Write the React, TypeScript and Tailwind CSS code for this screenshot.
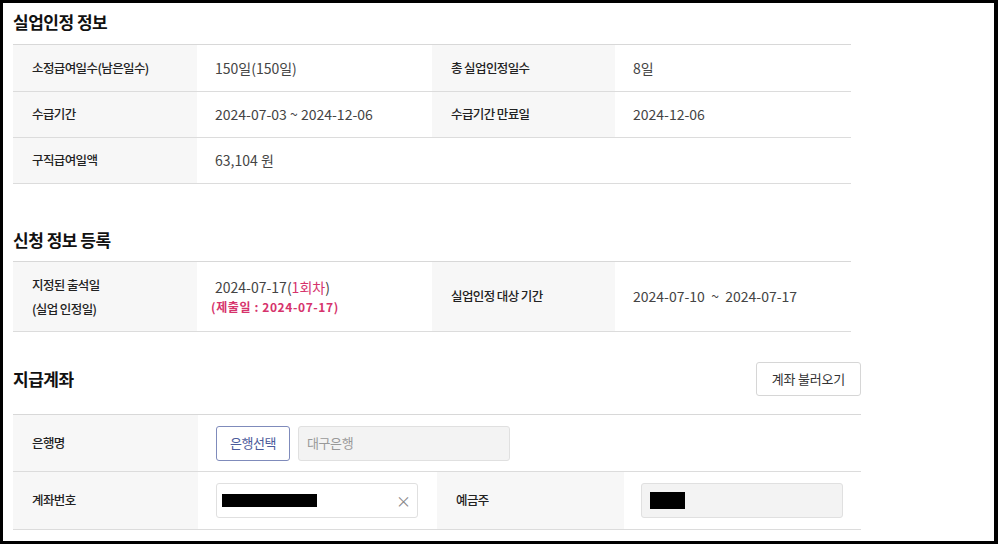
import React from "react";

const font = { fontFamily: '"Noto Sans CJK KR", "Noto Sans", sans-serif' };

const Label = ({ children, className = "" }: { children: React.ReactNode; className?: string }) => (
  <div className={`flex items-center bg-[#f7f7f7] pl-[19px] text-[12.5px] font-medium tracking-[-0.6px] text-[#222] ${className}`}>
    {children}
  </div>
);

const Value = ({ children, className = "" }: { children: React.ReactNode; className?: string }) => (
  <div className={`flex items-center whitespace-pre pl-[18px] text-[14px] tracking-[0px] text-[#444] ${className}`}>{children}</div>
);

export default function App() {
  return (
    <div style={font} className="w-[998px] h-[544px] overflow-hidden bg-white border-black border-t-[3px] border-l-[3px] border-r-[4px] border-b-[3px]">
      <div className="pl-[10px] pt-[7px]">
        <h2 className="h-[24px] text-[17px] font-bold leading-[24px] tracking-[-0.5px] text-[#111]">실업인정 정보</h2>

        <div className="mt-[10px] w-[838px] border-t border-[#d8d8d8]">
          <div className="grid h-[47px] grid-cols-[184px_235px_183px_236px] border-b border-[#dcdcdc]">
            <Label>소정급여일수(남은일수)</Label>
            <Value>150일(150일)</Value>
            <Label>총 실업인정일수</Label>
            <Value>8일</Value>
          </div>
          <div className="grid h-[46px] grid-cols-[184px_235px_183px_236px] border-b border-[#dcdcdc]">
            <Label>수급기간</Label>
            <Value>2024-07-03 ~ 2024-12-06</Value>
            <Label>수급기간 만료일</Label>
            <Value>2024-12-06</Value>
          </div>
          <div className="grid h-[46px] grid-cols-[184px_654px] border-b border-[#dcdcdc]">
            <Label>구직급여일액</Label>
            <Value>63,104 원</Value>
          </div>
        </div>

        <h2 className="mt-[44px] h-[24px] text-[17px] font-bold leading-[24px] tracking-[-0.5px] text-[#111]">신청 정보 등록</h2>

        <div className="mt-[9px] w-[838px] border-t border-[#d8d8d8]">
          <div className="grid h-[70px] grid-cols-[184px_235px_183px_236px] border-b border-[#dcdcdc]">
            <Label className="flex-col !items-start justify-center gap-[4px] leading-[20px]">
              <span>지정된 출석일</span>
              <span>(실업 인정일)</span>
            </Label>
            <div className="flex flex-col justify-center pl-[18px] leading-[19px]">
              <span className="text-[14px] text-[#444]">
                2024-07-17(<span className="text-[#d6336c]">1회차</span>)
              </span>
              <span className="-ml-[4px] text-[12px] font-bold tracking-[0.6px] text-[#d6336c]">(제출일 : 2024-07-17)</span>
            </div>
            <Label>실업인정 대상 기간</Label>
            <Value>{"2024-07-10  ~  2024-07-17"}</Value>
          </div>
        </div>

        <div className="mt-[30px] flex h-[34px] w-[848px] items-center justify-between">
          <h2 className="text-[17px] font-bold tracking-[-0.5px] text-[#111]">지급계좌</h2>
          <button className="h-[34px] w-[105px] rounded-[3px] border border-[#d6d6d6] bg-white text-[13px] tracking-[-0.2px] text-[#333]">
            계좌 불러오기
          </button>
        </div>

        <div className="mt-[18px] w-[848px] border-t border-[#d8d8d8]">
          <div className="grid h-[57px] grid-cols-[185px_663px] border-b border-[#dcdcdc]">
            <Label>은행명</Label>
            <div className="flex items-center gap-[8px] pl-[18px]">
              <button className="h-[35px] w-[74px] rounded-[3px] border border-[#7f8bbb] bg-white text-[13px] tracking-[-0.4px] text-[#4b5b9b]">
                은행선택
              </button>
              <div className="flex h-[35px] w-[212px] items-center rounded-[3px] border border-[#e0e0e0] bg-[#f3f3f3] pl-[8px] text-[13px] tracking-[-0.4px] text-[#999]">
                대구은행
              </div>
            </div>
          </div>
          <div className="grid h-[58px] grid-cols-[185px_239px_187px_237px] border-b border-[#dcdcdc]">
            <Label>계좌번호</Label>
            <div className="flex items-center pl-[18px]">
              <div className="flex h-[35px] w-[202px] items-center justify-between rounded-[3px] border border-[#e0e0e0] bg-white pl-[5px] pr-[6px]">
                <div className="h-[13px] w-[95px] bg-black" />
                <span className="text-[15px] leading-none text-[#888]">×</span>
              </div>
            </div>
            <Label>예금주</Label>
            <div className="flex items-center pl-[17px]">
              <div className="flex h-[35px] w-[202px] items-center rounded-[3px] border border-[#e0e0e0] bg-[#f3f3f3] pl-[8px]">
                <div className="h-[17px] w-[35px] bg-black" />
              </div>
            </div>
          </div>
        </div>
      </div>
    </div>
  );
}
